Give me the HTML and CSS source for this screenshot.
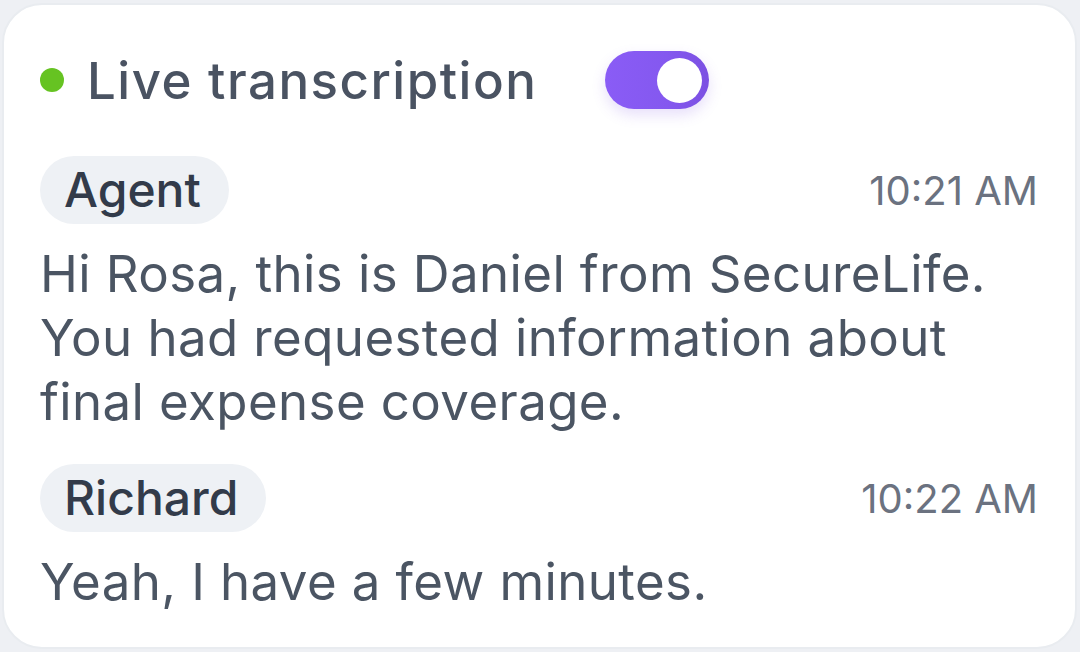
FILE: index.html
```html
<!DOCTYPE html>
<html lang="en">
<head>
<meta charset="utf-8">
<title>Live transcription</title>
<link rel="stylesheet" href="styles.css">
</head>
<body>
<div class="card">
  <div class="header">
    <span class="dot"></span>
    <h1 class="title">Live transcription</h1>
    <span class="toggle"><span class="knob"></span></span>
  </div>
  <div class="entry">
    <div class="meta">
      <span class="speaker">Agent</span>
      <span class="time">10:21 AM</span>
    </div>
    <p class="message">Hi Rosa, this is Daniel from SecureLife. You had requested information about final expense coverage.</p>
  </div>
  <div class="entry">
    <div class="meta">
      <span class="speaker">Richard</span>
      <span class="time">10:22 AM</span>
    </div>
    <p class="message">Yeah, I have a few minutes.</p>
  </div>
</div>
</body>
</html>
```

FILE: styles.css
```css
html, body {
  margin: 0;
  height: 100%;
}
body {
  background: #eef0f4;
  font-family: Inter, "Liberation Sans", sans-serif;
  padding: 3px 3px 3px 2px;
  box-sizing: border-box;
}
.card {
  height: 100%;
  box-sizing: border-box;
  background: #ffffff;
  border: 2px solid #e9ecf0;
  border-radius: 40px;
  padding: 46px 37px 0 36px;
}
.header {
  display: flex;
  align-items: center;
  height: 58px;
}
.dot {
  width: 24px;
  height: 24px;
  border-radius: 50%;
  background: #66c322;
  flex: none;
}
.title {
  margin: 0 0 0 23px;
  font-size: 51px;
  font-weight: 500;
  color: #4a5362;
  letter-spacing: 1.5px;
  white-space: nowrap;
}
.toggle {
  margin-left: 68px;
  width: 104px;
  height: 58px;
  flex: none;
  border-radius: 29px;
  background: linear-gradient(90deg, #8a5cf6 0%, #8458ef 60%, #7b50e2 100%);
  box-shadow: 0 6px 14px rgba(124, 80, 226, 0.18);
  display: flex;
  align-items: center;
  justify-content: flex-end;
  padding: 0 7px;
  box-sizing: border-box;
}
.knob {
  width: 45px;
  height: 45px;
  border-radius: 50%;
  background: #ffffff;
}
.entry {
  margin-top: 47px;
}
.entry + .entry {
  margin-top: 30px;
}
.meta {
  display: flex;
  align-items: center;
  justify-content: space-between;
}
.speaker {
  background: #eef1f5;
  color: #323b4a;
  font-size: 48px;
  font-weight: 500;
  height: 68px;
  line-height: 68px;
  padding: 0 28px 0 24px;
  border-radius: 34px;
}
.time {
  color: #6b7280;
  font-size: 40px;
}
.message {
  margin: 18px 0 0;
  color: #4b5563;
  font-size: 51px;
  letter-spacing: 0.4px;
  line-height: 64px;
}
```
